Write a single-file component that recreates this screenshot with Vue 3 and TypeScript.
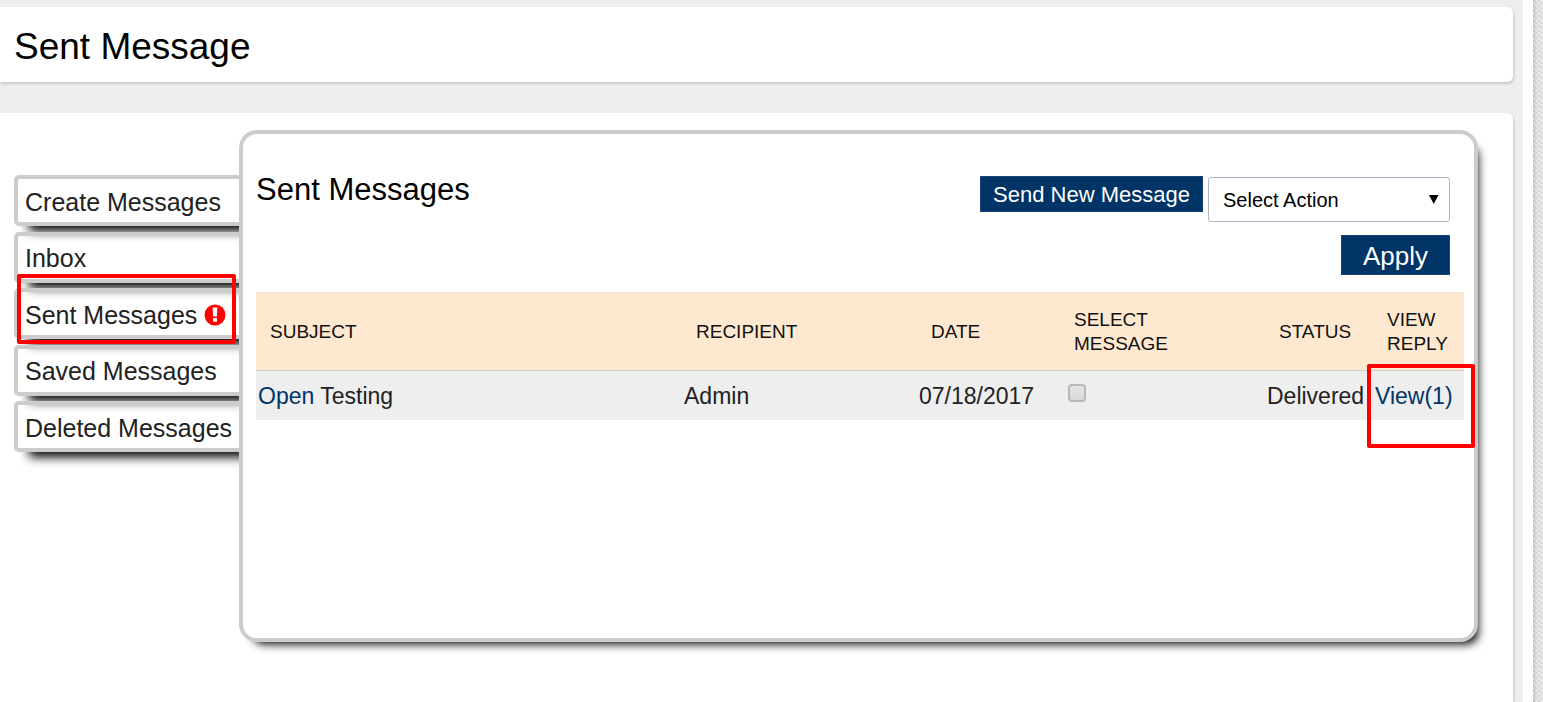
<script setup lang="ts">
import { ref } from 'vue'

interface Folder {
  label: string
  alert?: boolean
}

interface Message {
  subject: string
  recipient: string
  date: string
  status: string
  replies: number
  selected: boolean
}

const folders: Folder[] = [
  { label: 'Create Messages' },
  { label: 'Inbox' },
  { label: 'Sent Messages', alert: true },
  { label: 'Saved Messages' },
  { label: 'Deleted Messages' },
]

const messages = ref<Message[]>([
  {
    subject: 'Testing',
    recipient: 'Admin',
    date: '07/18/2017',
    status: 'Delivered',
    replies: 1,
    selected: false,
  },
])

const action = ref('')
</script>

<template>
  <div class="page">
    <div class="main">
      <header class="card title-card">
        <h1>Sent Message</h1>
      </header>

      <main class="card body-card">
        <nav class="folders" aria-label="Message folders">
          <a v-for="folder in folders" :key="folder.label" class="folder" href="#">
            {{ folder.label }}
            <svg v-if="folder.alert" class="alert" viewBox="0 0 22 22" aria-hidden="true">
              <circle cx="11" cy="11" r="10.5" fill="#f00" />
              <path d="M8.600 3.500h4.800l-.5 9H9.100z" fill="#fff" />
              <rect x="9" y="14" width="4" height="3.800" rx=".5" fill="#fff" />
            </svg>
            <span v-if="folder.alert" class="mark mark-folder"></span>
          </a>
        </nav>

        <section class="panel">
          <div class="toolbar">
            <h2>Sent Messages</h2>
            <div class="actions">
              <div class="action-row">
                <button class="send" type="button">Send New Message</button>
                <div class="picker">
                  <select v-model="action" aria-label="Select Action">
                    <option value="">Select Action</option>
                    <option value="save">Save</option>
                    <option value="delete">Delete</option>
                  </select>
                  <svg class="arrow" viewBox="0 0 10 9" aria-hidden="true">
                    <path d="M0 0h9.500L4.750 9z" />
                  </svg>
                </div>
              </div>
              <button class="apply" type="button">Apply</button>
            </div>
          </div>

          <table>
            <colgroup>
              <col />
              <col class="c-recipient" />
              <col class="c-date" />
              <col class="c-select" />
              <col class="c-status" />
              <col class="c-reply" />
            </colgroup>
            <thead>
              <tr>
                <th>SUBJECT</th>
                <th>RECIPIENT</th>
                <th>DATE</th>
                <th>SELECT<br />MESSAGE</th>
                <th>STATUS</th>
                <th>VIEW<br />REPLY</th>
              </tr>
            </thead>
            <tbody>
              <tr v-for="message in messages" :key="message.subject">
                <td><a href="#">Open</a> {{ message.subject }}</td>
                <td>{{ message.recipient }}</td>
                <td>{{ message.date }}</td>
                <td class="tick">
                  <input v-model="message.selected" type="checkbox" :aria-label="'Select ' + message.subject" />
                </td>
                <td>{{ message.status }}</td>
                <td class="reply">
                  <a href="#">View({{ message.replies }})</a>
                  <span class="mark mark-reply"></span>
                </td>
              </tr>
            </tbody>
          </table>
        </section>
      </main>
    </div>
    <div class="texture"></div>
  </div>
</template>

<style>
body {
  margin: 0;
}
</style>

<style scoped>
.page {
  display: flex;
  min-height: 100vh;
  background: #fff;
  color: #111;
  font-family: "Liberation Sans", Arial, sans-serif;
}

.page * {
  box-sizing: border-box;
}

.main {
  display: flex;
  flex: 1;
  flex-direction: column;
  gap: 31px;
  min-width: 0;
  margin-right: 10px;
  padding: 7px 10px 0 0;
  background: #eee;
}

.texture {
  width: 10px;
  background:
    linear-gradient(90deg, rgba(0, 0, 0, 0.1), transparent 5px),
    radial-gradient(circle at 1px 1px, #d2d2d2 1px, transparent 1px) 0 0 / 5px 5px,
    radial-gradient(circle at 3px 3px, #d8d8d8 1px, transparent 1px) 0 0 / 5px 5px,
    #e8e8e8;
}

.card {
  background: #fff;
  box-shadow: 1px 2px 3px rgba(0, 0, 0, 0.16);
}

.title-card {
  padding: 19px 14px 14px;
  border-radius: 0 6px 6px 0;
}

h1,
h2 {
  margin: 0;
  color: #000;
  font-weight: 400;
}

h1 {
  font-size: 37px;
  line-height: 42px;
}

h2 {
  font-size: 31px;
  line-height: 36px;
}

.body-card {
  display: flex;
  flex: 1;
  align-items: flex-start;
  padding: 17px 35px 40px 14px;
  border-radius: 0 6px 0 0;
}

.folders {
  display: flex;
  flex: none;
  flex-direction: column;
  justify-content: space-between;
  width: 245px;
  height: 277px;
  margin: 45px -20px 0 0;
}

.folder {
  position: relative;
  display: flex;
  align-items: center;
  gap: 7px;
  height: 51px;
  padding: 2px 0 0 7px;
  border: 4px solid #ccc;
  border-radius: 5px 0 0 5px;
  box-shadow: 10px 10px 10px -5px #000;
  color: #222;
  font-size: 25px;
  line-height: 30px;
  text-decoration: none;
  white-space: nowrap;
}

.alert {
  width: 22px;
  height: 22px;
}

.mark {
  position: absolute;
  z-index: 2;
  border: 4px solid #f00;
  border-radius: 2px;
  pointer-events: none;
}

.mark-folder {
  top: -18px;
  left: -1px;
  width: 219px;
  height: 70px;
}

.mark-reply {
  top: -7px;
  right: -11px;
  width: 108px;
  height: 84px;
}

.panel {
  position: relative;
  z-index: 1;
  flex: 1;
  min-width: 0;
  min-height: 512px;
  padding: 38px 10px 20px 13px;
  border: 4px solid #ccc;
  border-radius: 18px;
  background: #fff;
  box-shadow: 7px 9px 10px -7px #000;
}

.toolbar {
  display: flex;
  justify-content: space-between;
  padding-right: 14px;
}

.actions {
  display: flex;
  flex-direction: column;
  align-items: flex-end;
  gap: 13px;
  padding-top: 4px;
}

.action-row {
  display: flex;
  align-items: flex-start;
  gap: 5px;
}

button {
  border: 1px solid #1a4576;
  border-radius: 0;
  background: #036;
  color: #fff;
  font-family: inherit;
}

.send {
  height: 36px;
  padding: 2px 12px 0;
  font-size: 22px;
  line-height: 30px;
}

.apply {
  height: 40px;
  padding: 2px 21px 0;
  font-size: 26px;
  line-height: 30px;
}

.picker {
  position: relative;
  margin-top: 1px;
}

select {
  display: block;
  width: 242px;
  height: 45px;
  padding: 0 30px 0 14px;
  border: 1px solid #b4b4c8;
  border-radius: 3px;
  appearance: none;
  background: #fff;
  color: #000;
  font-family: inherit;
  font-size: 20px;
}

.arrow {
  position: absolute;
  top: 18px;
  right: 11px;
  width: 10px;
  height: 9px;
  pointer-events: none;
}

table {
  width: 100%;
  margin-top: 17px;
  border-collapse: separate;
  border-spacing: 0;
  table-layout: fixed;
}

.c-recipient {
  width: 235px;
}

.c-date {
  width: 143px;
}

.c-select {
  width: 205px;
}

.c-status {
  width: 108px;
}

.c-reply {
  width: 91px;
}

th {
  height: 79px;
  padding: 2px 0 0 14px;
  border-bottom: 1px solid #ccc;
  background: #ffe8d0;
  color: #111;
  font-size: 19px;
  font-weight: 400;
  line-height: 24px;
  text-align: left;
}

td {
  height: 49px;
  padding: 0 0 0 2px;
  background: #eee;
  color: #222;
  font-size: 23px;
  line-height: 28px;
  white-space: nowrap;
}

td a {
  color: #036;
  text-decoration: none;
}

.tick {
  padding-left: 8px;
}

input {
  display: block;
  width: 18px;
  height: 18px;
  margin: 0 0 6px;
  border: 2px solid #b8b8b8;
  border-radius: 4px;
  appearance: none;
  background: linear-gradient(#e6e6e6, #d8d8d8);
}

input:checked {
  background: #036;
}

.reply {
  position: relative;
}
</style>
